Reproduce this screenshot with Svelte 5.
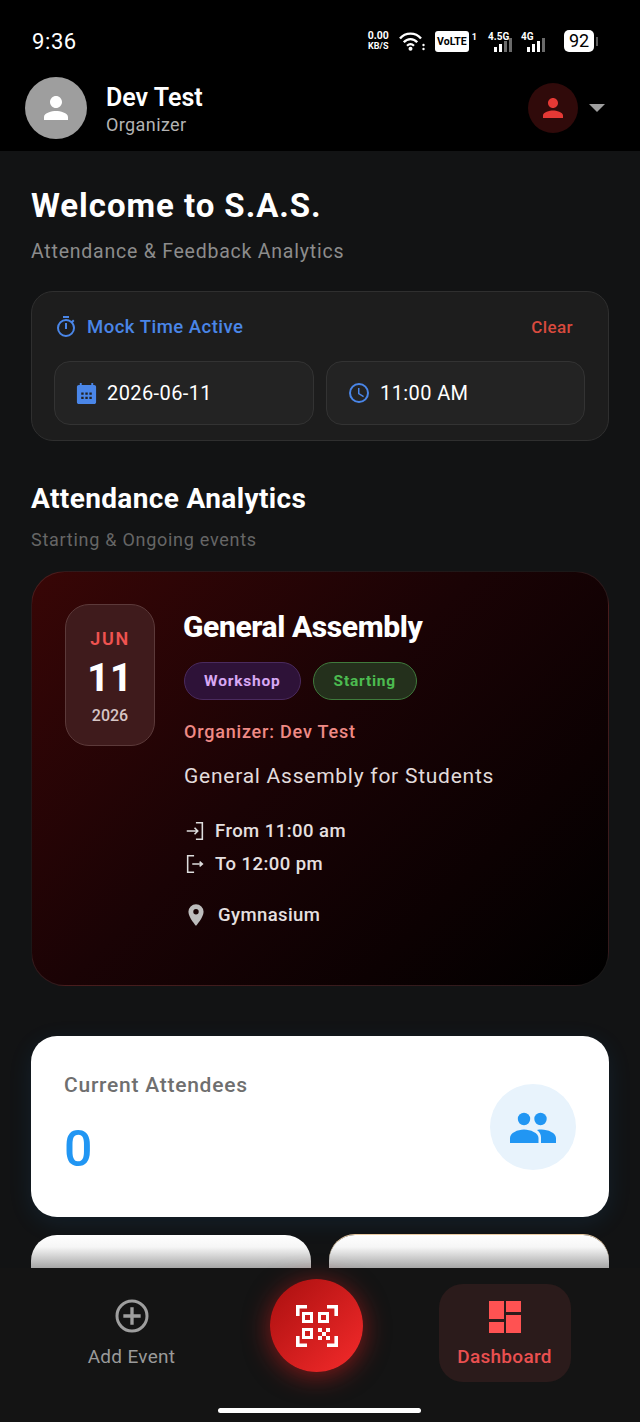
<script>
  let statusTime = '9:36';
  const tags = [
    { label: 'Workshop', kind: 'purple' },
    { label: 'Starting', kind: 'green' }
  ];
</script>

<div class="screen">
  <header class="top">
    <div class="status">
      <span class="status__time">{statusTime}</span>
      <div class="status__icons">
        <span class="speed"><b>0.00</b><b class="speed__unit">KB/S</b></span>
        <svg class="wifi" viewBox="0 0 26 20" width="26" height="20" fill="none" stroke="#fff">
          <path d="M1 7.500C6.500 1 16.500 1 22 7.500" stroke-width="2.400" />
          <path d="M4.800 11.200C8.500 7 14.500 7 18.200 11.200" stroke-width="2.300" />
          <path d="M8 14.800C10.200 12.600 12.800 12.600 15 14.800" stroke-width="2.200" />
          <circle cx="11.500" cy="17.800" r="2" fill="#fff" stroke="none" />
          <circle cx="24.500" cy="14" r="1.200" fill="#fff" stroke="none" />
          <circle cx="24.500" cy="18" r="1.200" fill="#fff" stroke="none" />
        </svg>
        <span class="volte">VoLTE</span>
        <span class="sim">1</span>
        <span class="net net--first">
          <span class="net__label">4.5G</span>
          <span class="bars"><i class="h1"></i><i class="h2"></i><i class="h3 dim"></i><i class="h4 dim"></i></span>
        </span>
        <span class="net net--second">
          <span class="net__label">4G</span>
          <span class="bars"><i class="h1"></i><i class="h2"></i><i class="h3"></i><i class="h4 dim"></i></span>
        </span>
        <span class="battery"><span class="battery__body">92</span><span class="battery__cap"></span></span>
      </div>
    </div>

    <div class="profile">
      <div class="avatar">
        <svg viewBox="0 0 24 24" width="36" height="36" fill="#fff"><path d="M12 12c2.200 0 4-1.800 4-4s-1.800-4-4-4-4 1.800-4 4 1.800 4 4 4zm0 2c-2.700 0-8 1.300-8 4v2h16v-2c0-2.700-5.300-4-8-4z" /></svg>
      </div>
      <div class="profile__text">
        <span class="profile__name">Dev Test</span>
        <span class="profile__role">Organizer</span>
      </div>
      <div class="account">
        <span class="account__icon">
          <svg viewBox="0 0 24 24" width="30" height="30" fill="#e53935"><path d="M12 12c2.200 0 4-1.800 4-4s-1.800-4-4-4-4 1.800-4 4 1.800 4 4 4zm0 2c-2.700 0-8 1.300-8 4v2h16v-2c0-2.700-5.300-4-8-4z" /></svg>
        </span>
        <span class="account__caret"></span>
      </div>
    </div>
  </header>

  <main class="content">
    <h1 class="welcome">Welcome to S.A.S.</h1>
    <p class="welcome__sub">Attendance &amp; Feedback Analytics</p>

    <section class="mock">
      <div class="mock__head">
        <svg viewBox="0 0 24 24" width="24" height="24" fill="#4a86e8"><path d="M15 1H9v2h6V1zm-4 13h2V8h-2v6zm8.030-6.610 1.420-1.420c-.430-.510-.900-.990-1.410-1.410l-1.420 1.420A8.962 8.962 0 0 0 12 4a9 9 0 1 0 9 9c0-2.120-.740-4.070-1.970-5.610zM12 20a7 7 0 1 1 0-14 7 7 0 0 1 0 14z" /></svg>
        <span class="mock__title">Mock Time Active</span>
        <span class="mock__clear">Clear</span>
      </div>
      <div class="mock__fields">
        <div class="field">
          <svg viewBox="0 0 24 24" width="23" height="23" fill="#4a86e8"><path d="M20 3h-1V1h-2v2H7V1H5v2H4c-1.100 0-2 .900-2 2v16c0 1.100.900 2 2 2h16c1.100 0 2-.900 2-2V5c0-1.100-.900-2-2-2zM6.500 11h2.500v2.300H6.500V11zm4.300 0h2.500v2.300h-2.500V11zm4.200 0h2.500v2.300H15V11zM6.500 15.500h2.500v2.300H6.500v-2.300zm4.300 0h2.500v2.300h-2.500v-2.300zm4.200 0h2.500v2.300H15v-2.300z" fill-rule="evenodd" /></svg>
          <span>2026-06-11</span>
        </div>
        <div class="field">
          <svg viewBox="0 0 24 24" width="24" height="24" fill="#4a86e8"><path d="M12 2a10 10 0 1 0 0 20 10 10 0 0 0 0-20zm0 18a8 8 0 1 1 0-16 8 8 0 0 1 0 16zm.500-13H11v6l5.200 3.200.800-1.300-4.500-2.700V7z" /></svg>
          <span>11:00 AM</span>
        </div>
      </div>
    </section>

    <h2 class="section">Attendance Analytics</h2>
    <p class="section__sub">Starting &amp; Ongoing events</p>

    <section class="event">
      <div class="date">
        <span class="date__month">JUN</span>
        <span class="date__day">11</span>
        <span class="date__year">2026</span>
      </div>
      <div class="event__body">
        <h3 class="event__title">General Assembly</h3>
        <div class="tags">
          {#each tags as tag}
            <span class="tag tag--{tag.kind}">{tag.label}</span>
          {/each}
        </div>
        <p class="event__org">Organizer: Dev Test</p>
        <p class="event__desc">General Assembly for Students</p>
        <div class="time">
          <svg viewBox="0 0 24 24" width="22" height="22" fill="none" stroke="#ddd" stroke-width="1.700"><path d="M13 3h7v18h-7M3 12h12M11.500 8.500 15 12l-3.500 3.500" /></svg>
          <span>From 11:00 am</span>
        </div>
        <div class="time time--to">
          <svg viewBox="0 0 24 24" width="22" height="22" fill="none" stroke="#ddd" stroke-width="1.700"><path d="M11 3H4v18h7M9 12h11M17 9.500l3 2.500-3 2.500" /></svg>
          <span>To 12:00 pm</span>
        </div>
        <div class="place">
          <svg viewBox="0 0 24 24" width="26" height="26" fill="#bdbdbd"><path d="M12 2a7 7 0 0 0-7 7c0 5.200 7 13 7 13s7-7.800 7-13a7 7 0 0 0-7-7zm0 9.500a2.500 2.500 0 1 1 0-5 2.500 2.500 0 0 1 0 5z" /></svg>
          <span>Gymnasium</span>
        </div>
      </div>
    </section>

    <section class="stat">
      <div class="stat__text">
        <p class="stat__label">Current Attendees</p>
        <p class="stat__value">0</p>
      </div>
      <span class="stat__icon">
        <svg viewBox="0 0 50 34" width="50" height="34" fill="#2196f3">
          <circle cx="16" cy="9" r="6.200" />
          <circle cx="32.500" cy="9" r="6.200" />
          <path d="M2 33v-5c0-5 7.500-8.500 14-8.500s14.500 3.500 14.500 8.500v5H2z" />
          <path d="M33 33v-5.500c0-3-1.500-5.800-4-7.500 1.500-.400 3-.500 4.500-.500 6.500 0 14.500 3.500 14.500 8.500v5H33z" />
        </svg>
      </span>
    </section>

    <div class="mini-row">
      <div class="mini"></div>
      <div class="mini mini--warm"></div>
    </div>
  </main>

  <nav class="bottom">
    <div class="bottom__item">
      <svg viewBox="0 0 24 24" width="40" height="40" fill="none" stroke="#9e9e9e" stroke-width="1.800"><circle cx="12" cy="12" r="9" /><path d="M12 6.800v10.400M6.800 12h10.400" stroke-width="2" /></svg>
      <span>Add Event</span>
    </div>
    <button class="fab" aria-label="Scan QR code">
      <svg viewBox="0 0 42 42" width="42" height="42" fill="none" stroke="#fff">
        <path d="M1.800 11V1.800H11M31 1.800h9.200V11M1.800 31v9.200H11M40.200 31v9.200H31" stroke-width="3.600" />
        <rect x="7.500" y="8.500" width="8" height="8" stroke-width="3" />
        <rect x="23.500" y="8.500" width="8" height="8" stroke-width="3" />
        <rect x="7.500" y="24.500" width="8" height="8" stroke-width="3" />
        <path d="M22 23h4v4h-4zM30 23h4v4h-4zM26 27h4v4h-4zM22 31h4v4h-4zM30 31h4v4h-4z" fill="#fff" stroke="none" />
      </svg>
    </button>
    <div class="bottom__item bottom__item--active">
      <svg viewBox="0 0 32 32" width="32" height="32" fill="#ff5252"><path d="M0 0h15v18H0zM17 0h15v11H17zM17 14h15v18H17zM0 21h15v11H0z" /></svg>
      <span>Dashboard</span>
    </div>
    <span class="home-bar"></span>
  </nav>
</div>

<style>
  :global(body) {
    margin: 0;
    background: #121314;
  }

  .screen {
    width: 640px;
    height: 1422px;
    display: flex;
    flex-direction: column;
    overflow: hidden;
    font-family: Roboto, sans-serif;
    color: #fff;
    background: #121314;
  }

  .top {
    height: 151px;
    flex-shrink: 0;
    background: #000;
    box-sizing: border-box;
    padding-top: 27px;
  }

  .status {
    height: 28px;
    padding: 0 42px 0 32px;
    display: flex;
    align-items: center;
    justify-content: space-between;
  }

  .status__time {
    font-size: 22px;
    letter-spacing: 0.6px;
  }

  .status__icons {
    display: flex;
    align-items: center;
  }

  .speed {
    display: flex;
    flex-direction: column;
    align-items: center;
    font-size: 10.500px;
    line-height: 10px;
  }

  .speed b {
    font-weight: 700;
  }

  .speed__unit {
    font-size: 9px;
  }

  .wifi {
    margin-left: 10px;
  }

  .volte {
    margin-left: 10px;
    width: 34px;
    height: 21px;
    border-radius: 3px;
    background: #fff;
    color: #000;
    font-size: 10.500px;
    font-weight: 700;
    display: flex;
    align-items: center;
    justify-content: center;
  }

  .sim {
    font-size: 9px;
    font-weight: 700;
    margin: -8px 0 0 3px;
  }

  .net {
    position: relative;
    width: 24px;
    height: 22px;
  }

  .net--first {
    margin-left: 11px;
  }

  .net--second {
    margin-left: 9px;
  }

  .net__label {
    position: absolute;
    left: 0;
    top: 1px;
    font-size: 10px;
    font-weight: 700;
    line-height: 11px;
  }

  .bars {
    position: absolute;
    right: 0;
    bottom: 0;
    display: flex;
    align-items: flex-end;
    gap: 2px;
  }

  .bars i {
    display: block;
    width: 3px;
    background: #fff;
  }

  .bars .dim {
    background: #6a6a6a;
  }

  .h1 { height: 5px; }
  .h2 { height: 8px; }
  .h3 { height: 11px; }
  .h4 { height: 14px; }

  .battery {
    margin-left: 19px;
    display: flex;
    align-items: center;
    gap: 2px;
  }

  .battery__body {
    width: 30px;
    height: 22px;
    border-radius: 5px;
    background: #fff;
    color: #000;
    font-size: 18px;
    text-align: center;
    line-height: 22px;
  }

  .battery__cap {
    width: 2px;
    height: 9px;
    background: #5a5a5a;
  }

  .profile {
    margin-top: 22px;
    padding: 0 35px 0 25px;
    display: flex;
    align-items: center;
  }

  .avatar {
    width: 62px;
    height: 62px;
    border-radius: 50%;
    background: #9e9e9e;
    display: flex;
    align-items: center;
    justify-content: center;
  }

  .profile__text {
    flex: 1;
    margin-left: 19px;
    display: flex;
    flex-direction: column;
  }

  .profile__name {
    font-size: 25px;
    font-weight: 600;
    line-height: 34px;
  }

  .profile__role {
    font-size: 18px;
    letter-spacing: 0.4px;
    color: #b3b3b3;
    line-height: 20px;
  }

  .account {
    display: flex;
    align-items: center;
    gap: 11px;
  }

  .account__icon {
    width: 50px;
    height: 50px;
    border-radius: 50%;
    background: #300a0a;
    display: flex;
    align-items: center;
    justify-content: center;
  }

  .account__caret {
    border-left: 8px solid transparent;
    border-right: 8px solid transparent;
    border-top: 8px solid #9e9e9e;
  }

  .content {
    flex: 1;
    min-height: 0;
    overflow: hidden;
    padding: 0 31px;
  }

  .welcome {
    margin: 35px 0 0;
    font-size: 33px;
    line-height: 40px;
    font-weight: 700;
    letter-spacing: 0.95px;
  }

  .welcome__sub {
    margin: 15px 0 0;
    font-size: 19.500px;
    line-height: 22px;
    letter-spacing: 0.77px;
    color: #8c8c8c;
  }

  .mock {
    margin-top: 28px;
    height: 150px;
    box-sizing: border-box;
    padding: 0 22px;
    border: 1px solid #2f2f2f;
    border-radius: 22px;
    background: #1d1d1d;
  }

  .mock__head {
    height: 69px;
    display: flex;
    align-items: center;
  }

  .mock__title {
    margin-left: 9px;
    flex: 1;
    font-size: 18.500px;
    font-weight: 500;
    letter-spacing: 0.5px;
    color: #4a86e8;
  }

  .mock__clear {
    margin-right: 13px;
    font-size: 17px;
    font-weight: 500;
    letter-spacing: 0.4px;
    color: #d84a3e;
  }

  .mock__fields {
    display: grid;
    grid-template-columns: 260px 259px;
    gap: 12px;
  }

  .field {
    height: 64px;
    box-sizing: border-box;
    padding-left: 20px;
    display: flex;
    align-items: center;
    gap: 9px;
    border: 1px solid #333;
    border-radius: 16px;
    background: #232323;
    font-size: 20px;
    letter-spacing: 0.4px;
  }

  .section {
    margin: 41px 0 0;
    font-size: 28px;
    line-height: 34px;
    font-weight: 700;
    letter-spacing: 0.37px;
  }

  .section__sub {
    margin: 13px 0 0;
    font-size: 18px;
    line-height: 22px;
    letter-spacing: 0.73px;
    color: #666;
  }

  .event {
    margin-top: 20px;
    height: 415px;
    box-sizing: border-box;
    padding: 32px 33px;
    display: flex;
    gap: 29px;
    border: 1.500px solid rgba(255, 235, 235, 0.1);
    border-radius: 34px;
    background: linear-gradient(135deg, #380606 0%, #1a0305 45%, #0c0102 75%, #000 100%);
  }

  .date {
    width: 90px;
    height: 142px;
    flex-shrink: 0;
    box-sizing: border-box;
    display: flex;
    flex-direction: column;
    align-items: center;
    border: 1px solid #5c3a3a;
    border-radius: 24px;
    background: #3f1b1c;
  }

  .date__month {
    margin-top: 23px;
    font-size: 18px;
    line-height: 22px;
    font-weight: 600;
    letter-spacing: 1.700px;
    color: #ef5350;
  }

  .date__day {
    margin-top: 6px;
    font-size: 38px;
    line-height: 44px;
    font-weight: 800;
    letter-spacing: 0.8px;
  }

  .date__year {
    margin-top: 6px;
    font-size: 16px;
    line-height: 20px;
    font-weight: 500;
    color: #d6c6c6;
  }

  .event__body {
    flex: 1;
    min-width: 0;
  }

  .event__title {
    margin: 2px 0 0 -1px;
    font-size: 30px;
    line-height: 42px;
    font-weight: 800;
    letter-spacing: -0.4px;
  }

  .tags {
    margin-top: 14px;
    display: flex;
    gap: 12px;
  }

  .tag {
    height: 38px;
    box-sizing: border-box;
    padding: 0 19px;
    display: flex;
    align-items: center;
    border-radius: 19px;
    font-size: 15.500px;
    font-weight: 700;
    letter-spacing: 0.8px;
  }

  .tag--purple {
    border: 1px solid #4a2a5e;
    background: #2e1238;
    color: #d8a8f4;
  }

  .tag--green {
    padding: 0 20px;
    border: 1px solid #3f7a3c;
    background: #24301c;
    color: #4cbb50;
  }

  .event__org {
    margin: 20px 0 0;
    font-size: 18px;
    line-height: 24px;
    font-weight: 500;
    letter-spacing: 0.8px;
    color: #ef8a85;
  }

  .event__desc {
    margin: 19px 0 0;
    font-size: 21px;
    line-height: 26px;
    letter-spacing: 0.75px;
    color: #e2dcdc;
  }

  .time {
    margin-top: 31px;
    height: 22px;
    display: flex;
    align-items: center;
    gap: 9px;
    font-size: 18.500px;
    font-weight: 500;
    letter-spacing: 0.45px;
    color: #e6e0e0;
  }

  .time--to {
    margin-top: 11px;
  }

  .place {
    margin: 27px 0 0 -1px;
    height: 26px;
    display: flex;
    align-items: center;
    gap: 9px;
    font-size: 18.500px;
    font-weight: 500;
    letter-spacing: 0.4px;
    color: #e6e0e0;
  }

  .stat {
    margin-top: 50px;
    height: 181px;
    box-sizing: border-box;
    padding: 0 33px;
    display: flex;
    align-items: center;
    justify-content: space-between;
    border-radius: 26px;
    background: #fff;
    box-shadow: 0 6px 24px rgba(33, 150, 243, 0.1);
  }

  .stat__text {
    margin-bottom: 3px;
  }

  .stat__label {
    margin: 0;
    font-size: 21px;
    line-height: 26px;
    font-weight: 500;
    letter-spacing: 0.75px;
    color: #6f6f6f;
  }

  .stat__value {
    margin: 21px 0 0;
    font-size: 50px;
    line-height: 60px;
    font-weight: 500;
    color: #2196f3;
  }

  .stat__icon {
    width: 86px;
    height: 86px;
    border-radius: 50%;
    background: #e8f3fc;
    display: flex;
    align-items: center;
    justify-content: center;
  }

  .mini-row {
    margin-top: 18px;
    display: grid;
    grid-template-columns: 280px 280px;
    gap: 18px;
  }

  .mini {
    height: 80px;
    border-radius: 26px 26px 0 0;
    background: linear-gradient(180deg, #fff 0%, #f6f6f6 15%, #a4a4a4 42%, #9a9a9a 100%);
  }

  .mini--warm {
    box-shadow: 0 -1px 0 #e8c9a0;
  }

  .bottom {
    position: relative;
    height: 154px;
    flex-shrink: 0;
    box-sizing: border-box;
    background: #141414;
    display: grid;
    grid-template-columns: 263px 114px 1fr;
    align-items: start;
    padding-top: 16px;
  }

  .bottom__item {
    width: 132px;
    height: 98px;
    box-sizing: border-box;
    padding-top: 12px;
    display: flex;
    flex-direction: column;
    align-items: center;
    gap: 9px;
    border-radius: 24px;
    justify-self: center;
    font-size: 19px;
    letter-spacing: 0.3px;
    color: #9a9a9a;
  }

  .bottom__item svg {
    flex-shrink: 0;
  }

  .bottom__item--active {
    margin-left: -8px;
    padding-top: 17px;
    gap: 12px;
    background: #2b1b1b;
    color: #ea5050;
    font-weight: 500;
  }

  .fab {
    margin: -5px 0 0 7px;
    width: 93px;
    height: 93px;
    padding: 0;
    border: none;
    border-radius: 50%;
    background: linear-gradient(135deg, #a90f0f 0%, #f52b2b 100%);
    box-shadow: 0 4px 26px rgba(229, 30, 30, 0.55);
    display: flex;
    align-items: center;
    justify-content: center;
  }

  .home-bar {
    position: absolute;
    left: 218px;
    bottom: 9px;
    width: 203px;
    height: 5px;
    border-radius: 3px;
    background: #fff;
  }
</style>
